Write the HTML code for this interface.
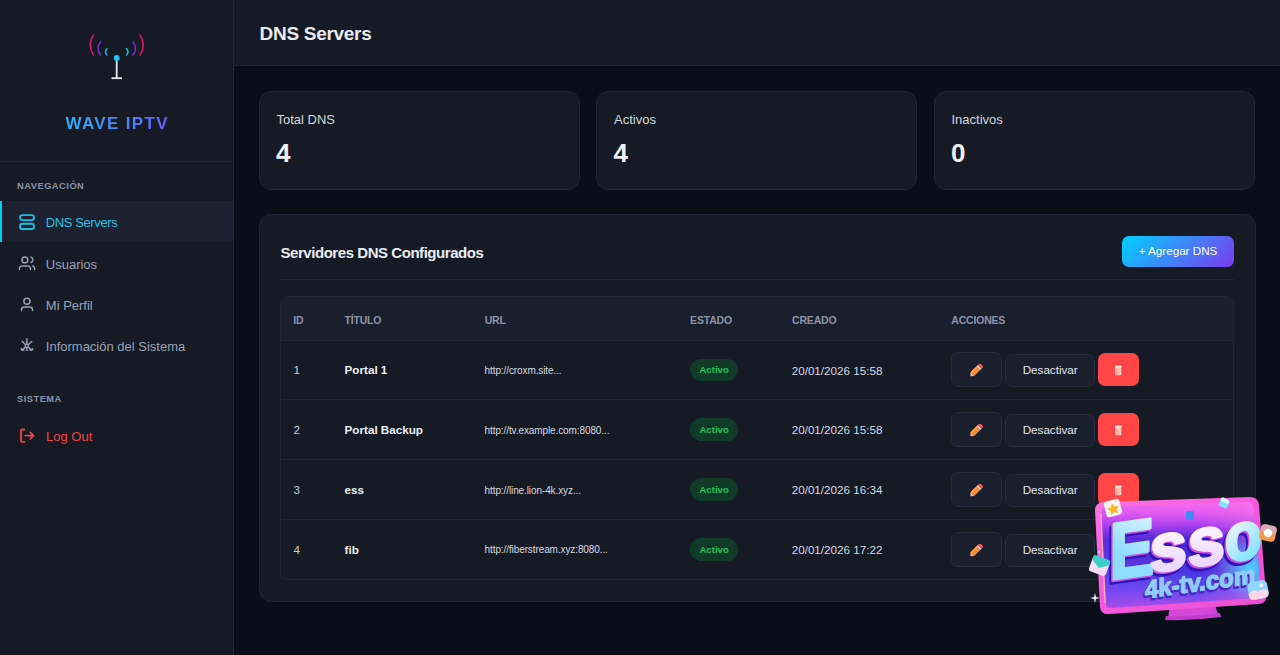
<!DOCTYPE html>
<html>
<head>
<meta charset="utf-8">
<style>
*{box-sizing:border-box;margin:0;padding:0}
html,body{width:1280px;height:655px;overflow:hidden;background:#0a0e19;font-family:"Liberation Sans",sans-serif;}
.a{position:absolute;white-space:nowrap;line-height:1}
#sb{position:absolute;left:0;top:0;width:234px;height:655px;background:#151a25;border-right:1px solid #212634}
#hd{position:absolute;left:234px;top:0;width:1046px;height:66px;background:#151a25;border-bottom:1px solid #212634}
.card{position:absolute;background:#151a25;border:1px solid #212634;border-radius:12px}
.btn{background:#1a1f2d;border:1px solid #262c3b;border-radius:7px}
.navt{font-size:13px;color:#9aa3b6}
.sect{font-size:9.3px;font-weight:700;color:#8a93a8;letter-spacing:0.5px}
.th{font-size:10.5px;font-weight:700;color:#8b93a8;letter-spacing:-0.2px}
</style>
</head>
<body>
<div id="sb">

<svg class="a" style="left:80px;top:25px" width="74" height="60" viewBox="80 25 74 60">
  <path d="M93.5 35 Q87 45 93.5 55" fill="none" stroke="#d8156a" stroke-width="1.6" stroke-linecap="round"/>
  <path d="M140 35 Q146.5 45 140 55" fill="none" stroke="#d8156a" stroke-width="1.6" stroke-linecap="round"/>
  <path d="M100.5 42 Q95.5 48.5 100.5 55" fill="none" stroke="#7a2fd4" stroke-width="1.6" stroke-linecap="round"/>
  <path d="M133 42 Q138 48.5 133 55" fill="none" stroke="#7a2fd4" stroke-width="1.6" stroke-linecap="round"/>
  <path d="M107 48.7 Q104 51.9 107 55" fill="none" stroke="#1fb4d8" stroke-width="1.5" stroke-linecap="round"/>
  <path d="M126.5 48.7 Q129.5 51.9 126.5 55" fill="none" stroke="#1fb4d8" stroke-width="1.6" stroke-linecap="round"/>
  <line x1="116.7" y1="58" x2="116.7" y2="78" stroke="#e8e8ee" stroke-width="1.8"/>
  <line x1="111.5" y1="78.2" x2="122" y2="78.2" stroke="#e8e8ee" stroke-width="1.8"/>
  <circle cx="116.7" cy="58" r="2.9" fill="#22c8f2"/>
</svg>

  <div class="a" style="left:0;width:233px;top:114.6px;text-align:center;font-size:17px;font-weight:700;letter-spacing:1.35px;padding-left:1.35px;background:linear-gradient(90deg,#2bb6ff 25%,#6a5cf8 75%);-webkit-background-clip:text;background-clip:text;color:transparent">WAVE IPTV</div>
  <div class="a" style="left:0;top:161px;width:233px;height:1px;background:#212634"></div>
  <div class="a sect" style="left:17px;top:181.93px">NAVEGACIÓN</div>
  <div class="a" style="left:0;top:201px;width:233px;height:41px;background:#1c2130"></div>
  <div class="a" style="left:0;top:201px;width:2px;height:41px;background:#00d0f5"></div>

<svg class="a" style="left:0;top:0" width="233" height="460" viewBox="0 0 233 460" fill="none" stroke-linecap="round" stroke-linejoin="round">
  <rect x="20.1" y="215.1" width="13.9" height="5" rx="2.3" stroke="#17bfe6" stroke-width="1.9"/>
  <rect x="20.1" y="223.7" width="13.9" height="5.3" rx="2.3" stroke="#17bfe6" stroke-width="1.9"/>
  <g stroke="#9aa2b5" stroke-width="1.45">
    <circle cx="24.9" cy="259.9" r="2.9"/>
    <path d="M19.4 269.4 V268.8 A3 3 0 0 1 22.4 265.9 H27.5 A3 3 0 0 1 30.5 268.8 V269.4"/>
    <path d="M30.9 257.1 A2.9 2.9 0 0 1 30.9 262.6"/>
    <path d="M32.7 266 A2.8 3 0 0 1 34.7 268.8 V269.4"/>
    <circle cx="26.9" cy="301.2" r="3.05"/>
    <path d="M21.4 310.4 V309.9 A3 3 0 0 1 24.4 307 H29.6 A3 3 0 0 1 32.6 309.9 V310.4"/>
    <circle cx="26.9" cy="345.9" r="1.7"/>
    <path d="M26.9 338.6 V344 M22.2 341.3 L25.4 344.6 M31.7 341.4 L28.4 344.6 M26.9 347.8 V350.6 M25.4 347.3 L22.2 350.1 M28.4 347.3 L31.7 350.1"/>
    <path d="M21.2 348.8 L22.2 350.3 L23.9 350" stroke-width="1.6"/>
    <path d="M32.6 348.8 L31.7 350.3 L30 350" stroke-width="1.6"/>
  </g>
  <g stroke="#ef4444" stroke-width="1.8">
    <path d="M24.4 429.5 H22.3 A1.3 1.3 0 0 0 21 430.8 V440.6 A1.3 1.3 0 0 0 22.3 441.9 H24.4"/>
    <path d="M25.3 435.6 H33.6 M30.3 432.4 L33.7 435.6 L30.3 438.8"/>
  </g>
</svg>

  <div class="a navt" style="left:45.8px;top:216.2px;color:#22c3e6;letter-spacing:-0.4px">DNS Servers</div>
  <div class="a navt" style="left:45.8px;top:257.5px">Usuarios</div>
  <div class="a navt" style="left:45.8px;top:299.0px">Mi Perfil</div>
  <div class="a navt" style="left:45.8px;top:340.3px">Información del Sistema</div>
  <div class="a sect" style="left:17px;top:395.33px">SISTEMA</div>
  <div class="a navt" style="left:46px;top:429.7px;color:#ef4444">Log Out</div>
</div>

<div id="hd">
  <div class="a" style="left:25.6px;top:23.62px;font-size:19px;font-weight:700;color:#e9ebf1;letter-spacing:-0.3px">DNS Servers</div>
</div>

<div class="card" style="left:259px;top:90.5px;width:321px;height:99px"></div>
<div class="card" style="left:596.4px;top:90.5px;width:321px;height:99px"></div>
<div class="card" style="left:934px;top:90.5px;width:321px;height:99px"></div>
<div class="a" style="left:276.5px;top:113.1px;font-size:13px;color:#d3d7df">Total DNS</div>
<div class="a" style="left:614px;top:113.1px;font-size:13px;color:#d3d7df">Activos</div>
<div class="a" style="left:951.5px;top:113.1px;font-size:13px;color:#d3d7df">Inactivos</div>
<div class="a" style="left:276px;top:139.89px;font-size:26px;font-weight:700;color:#eef0f5">4</div>
<div class="a" style="left:613.5px;top:139.89px;font-size:26px;font-weight:700;color:#eef0f5">4</div>
<div class="a" style="left:951px;top:139.89px;font-size:26px;font-weight:700;color:#eef0f5">0</div>

<div class="card" style="left:259px;top:214.3px;width:997px;height:388px"></div>
<div class="a" style="left:280.5px;top:244.7px;font-size:15px;font-weight:700;color:#e9ebf1;letter-spacing:-0.45px">Servidores DNS Configurados</div>
<div class="a" style="left:1122px;top:235.6px;width:112px;height:31px;border-radius:7px;background:linear-gradient(135deg,#00d2ff,#7c3aed)"></div>
<div class="a" style="left:1122px;top:244.82px;width:112px;text-align:center;font-size:11.67px;color:#fff">+ Agregar DNS</div>
<div class="a" style="left:280px;top:279px;width:954px;height:1px;background:#212634"></div>

<div class="a" style="left:280px;top:296px;width:954px;height:283.5px;border:1px solid #212634;border-radius:7px;overflow:hidden">
<div class="a" style="left:0;top:0;width:952px;height:43.5px;background:#1a1f2d"></div>
<div class="a" style="left:0;top:43px;width:952px;height:1px;background:#212634"></div>
<div class="a th" style="left:12.3px;top:17.71px">ID</div>
<div class="a th" style="left:63.5px;top:17.71px">TÍTULO</div>
<div class="a th" style="left:203.7px;top:17.71px">URL</div>
<div class="a th" style="left:409.1px;top:17.71px">ESTADO</div>
<div class="a th" style="left:511.1px;top:17.71px">CREADO</div>
<div class="a th" style="left:670.3px;top:17.71px">ACCIONES</div>
<div class="a" style="left:12.5px;top:67.02px;font-size:11.67px;color:#c9cdd6">1</div>
<div class="a" style="left:63.6px;top:67.02px;font-size:11.67px;font-weight:700;color:#eef0f5">Portal 1</div>
<div class="a" style="left:203.6px;top:68.94px;font-size:10px;color:#d6d9e1;letter-spacing:-0.1px">http://croxm.site...</div>
<div class="a" style="left:408.8px;top:61.60px;width:48.6px;height:22.7px;border-radius:12px;background:#123a29"></div>
<div class="a" style="left:408.8px;top:68.44px;width:48.6px;text-align:center;font-size:9.6px;font-weight:700;color:#22c55e">Activo</div>
<div class="a" style="left:510.7px;top:67.52px;font-size:11.67px;color:#d6d9e1">20/01/2026 15:58</div>
<div class="a btn" style="left:670px;top:55.00px;width:51px;height:35px"></div>
<svg class="a" style="left:688px;top:67.00px" width="14" height="13" viewBox="0 0 14 13"><g transform="translate(7 6.5) rotate(-45)"><path d="M-8 0 L-5.2 -2.6 L-5.2 2.6 Z" fill="#f3c7a8"/><path d="M-8 0 L-6.9 -1 L-6.9 1 Z" fill="#7a5a66"/><rect x="-5.2" y="-2.6" width="8.6" height="5.2" fill="#fb8a2b"/><rect x="-5.2" y="-2.6" width="8.6" height="1.5" fill="#ffa048"/><rect x="3.4" y="-2.6" width="1.8" height="5.2" fill="#dcd8e8"/><path d="M5.2 -2.6 H7 A1.1 1.1 0 0 1 8.1 -1.5 V1.5 A1.1 1.1 0 0 1 7 2.6 H5.2 Z" fill="#f4584a"/></g></svg>
<div class="a btn" style="left:724.2px;top:57.00px;width:90px;height:33px"></div>
<div class="a" style="left:724.2px;top:67.02px;width:90px;text-align:center;font-size:11.67px;color:#e2e5ec">Desactivar</div>
<div class="a" style="left:816.8px;top:56.00px;width:41.5px;height:33px;border-radius:7px;background:#ff4545"></div>
<svg class="a" style="left:833px;top:67.80px" width="9" height="11" viewBox="0 0 9 11"><rect x="0.9" y="0.6" width="7" height="2.3" rx="1" fill="#ffd9d2"/><rect x="1.1" y="3" width="6.2" height="7.3" rx="0.8" fill="#ffd0c6"/><rect x="2.6" y="3.6" width="0.8" height="6.2" fill="#ff6f86"/><rect x="4.5" y="3.6" width="0.8" height="6.2" fill="#ff9a70"/></svg>
<div class="a" style="left:0;top:102px;width:952px;height:1px;background:#212634"></div>
<div class="a" style="left:12.5px;top:126.87px;font-size:11.67px;color:#c9cdd6">2</div>
<div class="a" style="left:63.6px;top:126.87px;font-size:11.67px;font-weight:700;color:#eef0f5">Portal Backup</div>
<div class="a" style="left:203.6px;top:128.79px;font-size:10px;color:#d6d9e1;letter-spacing:-0.1px">http://tv.example.com:8080...</div>
<div class="a" style="left:408.8px;top:121.45px;width:48.6px;height:22.7px;border-radius:12px;background:#123a29"></div>
<div class="a" style="left:408.8px;top:128.29px;width:48.6px;text-align:center;font-size:9.6px;font-weight:700;color:#22c55e">Activo</div>
<div class="a" style="left:510.7px;top:127.37px;font-size:11.67px;color:#d6d9e1">20/01/2026 15:58</div>
<div class="a btn" style="left:670px;top:114.85px;width:51px;height:35px"></div>
<svg class="a" style="left:688px;top:126.85px" width="14" height="13" viewBox="0 0 14 13"><g transform="translate(7 6.5) rotate(-45)"><path d="M-8 0 L-5.2 -2.6 L-5.2 2.6 Z" fill="#f3c7a8"/><path d="M-8 0 L-6.9 -1 L-6.9 1 Z" fill="#7a5a66"/><rect x="-5.2" y="-2.6" width="8.6" height="5.2" fill="#fb8a2b"/><rect x="-5.2" y="-2.6" width="8.6" height="1.5" fill="#ffa048"/><rect x="3.4" y="-2.6" width="1.8" height="5.2" fill="#dcd8e8"/><path d="M5.2 -2.6 H7 A1.1 1.1 0 0 1 8.1 -1.5 V1.5 A1.1 1.1 0 0 1 7 2.6 H5.2 Z" fill="#f4584a"/></g></svg>
<div class="a btn" style="left:724.2px;top:116.85px;width:90px;height:33px"></div>
<div class="a" style="left:724.2px;top:126.87px;width:90px;text-align:center;font-size:11.67px;color:#e2e5ec">Desactivar</div>
<div class="a" style="left:816.8px;top:115.85px;width:41.5px;height:33px;border-radius:7px;background:#ff4545"></div>
<svg class="a" style="left:833px;top:127.65px" width="9" height="11" viewBox="0 0 9 11"><rect x="0.9" y="0.6" width="7" height="2.3" rx="1" fill="#ffd9d2"/><rect x="1.1" y="3" width="6.2" height="7.3" rx="0.8" fill="#ffd0c6"/><rect x="2.6" y="3.6" width="0.8" height="6.2" fill="#ff6f86"/><rect x="4.5" y="3.6" width="0.8" height="6.2" fill="#ff9a70"/></svg>
<div class="a" style="left:0;top:162px;width:952px;height:1px;background:#212634"></div>
<div class="a" style="left:12.5px;top:186.72px;font-size:11.67px;color:#c9cdd6">3</div>
<div class="a" style="left:63.6px;top:186.72px;font-size:11.67px;font-weight:700;color:#eef0f5">ess</div>
<div class="a" style="left:203.6px;top:188.63px;font-size:10px;color:#d6d9e1;letter-spacing:-0.1px">http://line.lion-4k.xyz...</div>
<div class="a" style="left:408.8px;top:181.30px;width:48.6px;height:22.7px;border-radius:12px;background:#123a29"></div>
<div class="a" style="left:408.8px;top:188.13px;width:48.6px;text-align:center;font-size:9.6px;font-weight:700;color:#22c55e">Activo</div>
<div class="a" style="left:510.7px;top:187.22px;font-size:11.67px;color:#d6d9e1">20/01/2026 16:34</div>
<div class="a btn" style="left:670px;top:174.70px;width:51px;height:35px"></div>
<svg class="a" style="left:688px;top:186.70px" width="14" height="13" viewBox="0 0 14 13"><g transform="translate(7 6.5) rotate(-45)"><path d="M-8 0 L-5.2 -2.6 L-5.2 2.6 Z" fill="#f3c7a8"/><path d="M-8 0 L-6.9 -1 L-6.9 1 Z" fill="#7a5a66"/><rect x="-5.2" y="-2.6" width="8.6" height="5.2" fill="#fb8a2b"/><rect x="-5.2" y="-2.6" width="8.6" height="1.5" fill="#ffa048"/><rect x="3.4" y="-2.6" width="1.8" height="5.2" fill="#dcd8e8"/><path d="M5.2 -2.6 H7 A1.1 1.1 0 0 1 8.1 -1.5 V1.5 A1.1 1.1 0 0 1 7 2.6 H5.2 Z" fill="#f4584a"/></g></svg>
<div class="a btn" style="left:724.2px;top:176.70px;width:90px;height:33px"></div>
<div class="a" style="left:724.2px;top:186.72px;width:90px;text-align:center;font-size:11.67px;color:#e2e5ec">Desactivar</div>
<div class="a" style="left:816.8px;top:175.70px;width:41.5px;height:33px;border-radius:7px;background:#ff4545"></div>
<svg class="a" style="left:833px;top:187.50px" width="9" height="11" viewBox="0 0 9 11"><rect x="0.9" y="0.6" width="7" height="2.3" rx="1" fill="#ffd9d2"/><rect x="1.1" y="3" width="6.2" height="7.3" rx="0.8" fill="#ffd0c6"/><rect x="2.6" y="3.6" width="0.8" height="6.2" fill="#ff6f86"/><rect x="4.5" y="3.6" width="0.8" height="6.2" fill="#ff9a70"/></svg>
<div class="a" style="left:0;top:222px;width:952px;height:1px;background:#212634"></div>
<div class="a" style="left:12.5px;top:246.57px;font-size:11.67px;color:#c9cdd6">4</div>
<div class="a" style="left:63.6px;top:246.57px;font-size:11.67px;font-weight:700;color:#eef0f5">fib</div>
<div class="a" style="left:203.6px;top:248.48px;font-size:10px;color:#d6d9e1;letter-spacing:-0.1px">http://fiberstream.xyz:8080...</div>
<div class="a" style="left:408.8px;top:241.15px;width:48.6px;height:22.7px;border-radius:12px;background:#123a29"></div>
<div class="a" style="left:408.8px;top:247.98px;width:48.6px;text-align:center;font-size:9.6px;font-weight:700;color:#22c55e">Activo</div>
<div class="a" style="left:510.7px;top:247.07px;font-size:11.67px;color:#d6d9e1">20/01/2026 17:22</div>
<div class="a btn" style="left:670px;top:234.55px;width:51px;height:35px"></div>
<svg class="a" style="left:688px;top:246.55px" width="14" height="13" viewBox="0 0 14 13"><g transform="translate(7 6.5) rotate(-45)"><path d="M-8 0 L-5.2 -2.6 L-5.2 2.6 Z" fill="#f3c7a8"/><path d="M-8 0 L-6.9 -1 L-6.9 1 Z" fill="#7a5a66"/><rect x="-5.2" y="-2.6" width="8.6" height="5.2" fill="#fb8a2b"/><rect x="-5.2" y="-2.6" width="8.6" height="1.5" fill="#ffa048"/><rect x="3.4" y="-2.6" width="1.8" height="5.2" fill="#dcd8e8"/><path d="M5.2 -2.6 H7 A1.1 1.1 0 0 1 8.1 -1.5 V1.5 A1.1 1.1 0 0 1 7 2.6 H5.2 Z" fill="#f4584a"/></g></svg>
<div class="a btn" style="left:724.2px;top:236.55px;width:90px;height:33px"></div>
<div class="a" style="left:724.2px;top:246.57px;width:90px;text-align:center;font-size:11.67px;color:#e2e5ec">Desactivar</div>
<div class="a" style="left:816.8px;top:235.55px;width:41.5px;height:33px;border-radius:7px;background:#ff4545"></div>
<svg class="a" style="left:833px;top:247.35px" width="9" height="11" viewBox="0 0 9 11"><rect x="0.9" y="0.6" width="7" height="2.3" rx="1" fill="#ffd9d2"/><rect x="1.1" y="3" width="6.2" height="7.3" rx="0.8" fill="#ffd0c6"/><rect x="2.6" y="3.6" width="0.8" height="6.2" fill="#ff6f86"/><rect x="4.5" y="3.6" width="0.8" height="6.2" fill="#ff9a70"/></svg>
</div>

<svg class="a" style="left:1080px;top:488px" width="200" height="140" viewBox="1080 488 200 140">
 <defs>
  <linearGradient id="wfr" x1="0" y1="0" x2="1" y2="1">
   <stop offset="0" stop-color="#ff74e4"/><stop offset="0.5" stop-color="#f558dc"/><stop offset="1" stop-color="#ea4fd2"/>
  </linearGradient>
  <linearGradient id="wsc" gradientUnits="userSpaceOnUse" x1="1180" y1="503" x2="1180" y2="608">
   <stop offset="0" stop-color="#f46cf0"/><stop offset="0.1" stop-color="#e25af2"/><stop offset="0.22" stop-color="#a23ef0"/><stop offset="0.34" stop-color="#4424d4"/><stop offset="0.62" stop-color="#4232dc"/><stop offset="0.82" stop-color="#5a48f0"/><stop offset="1" stop-color="#a84cea"/>
  </linearGradient>
  <linearGradient id="wtop" x1="0" y1="0" x2="1" y2="0">
   <stop offset="0" stop-color="#b040f4" stop-opacity="0.25"/><stop offset="0.6" stop-color="#f06ae4" stop-opacity="0"/><stop offset="1" stop-color="#ff80e0" stop-opacity="0.45"/>
  </linearGradient>
  <radialGradient id="wglow" gradientUnits="userSpaceOnUse" cx="1250" cy="568" r="32">
   <stop offset="0" stop-color="#46d2ff" stop-opacity="1"/><stop offset="1" stop-color="#46d2ff" stop-opacity="0"/>
  </radialGradient>
  <linearGradient id="gE" gradientUnits="userSpaceOnUse" x1="1112" y1="585" x2="1150" y2="515">
   <stop offset="0" stop-color="#90dcff"/><stop offset="0.45" stop-color="#c8eeff"/><stop offset="1" stop-color="#f8f2ff"/>
  </linearGradient>
  <linearGradient id="gS" gradientUnits="userSpaceOnUse" x1="0" y1="-40" x2="0" y2="0">
   <stop offset="0" stop-color="#fff4ff"/><stop offset="1" stop-color="#ead8ff"/>
  </linearGradient>
  <linearGradient id="gO" gradientUnits="userSpaceOnUse" x1="-15" y1="-40" x2="15" y2="0">
   <stop offset="0" stop-color="#f4f6ff"/><stop offset="1" stop-color="#78e0ff"/>
  </linearGradient>
 </defs>
 <!-- stand -->
 <path d="M1170 605 L1214 602 L1218 614 Q1193 618 1168 618 Z" fill="#d548d8"/>
 <path d="M1166 616 Q1193 617 1220 613 L1221 617 Q1193 621 1165 620 Z" fill="#c03ccc"/>
 <!-- frame -->
 <path d="M1103 502 L1250 497 Q1258 497 1259 505 L1266 595 Q1267 603 1259 604 L1109 614 Q1101 615 1100 607 L1095 510 Q1095 503 1103 502 Z" fill="url(#wfr)"/>
 <path d="M1107 507 L1247 502 Q1253 502 1254 508 L1261 591 Q1262 598 1255 598 L1112 608 Q1106 609 1106 602 L1101 513 Q1101 507 1107 507 Z" fill="url(#wsc)"/>
 <path d="M1107 507 L1247 502 Q1253 502 1254 508 L1261 591 Q1262 598 1255 598 L1112 608 Q1106 609 1106 602 L1101 513 Q1101 507 1107 507 Z" fill="url(#wtop)"/>
 <path d="M1107 507 L1247 502 Q1253 502 1254 508 L1261 591 Q1262 598 1255 598 L1112 608 Q1106 609 1106 602 L1101 513 Q1101 507 1107 507 Z" fill="url(#wglow)"/>
 <path d="M1101 513 L1105 603" stroke="#ffc0a8" stroke-width="1.2" opacity="0.85"/>
 <g transform="translate(1130 580) skewY(-8) translate(-1130 -580)">
  <text x="0" y="0" text-anchor="middle" font-family="Liberation Sans" font-weight="700" font-size="80" fill="#3014b8" stroke="#3014b8" stroke-width="4" stroke-linejoin="round" transform="translate(1129 580.3) scale(0.84 1)" >E</text><text x="0" y="0" text-anchor="middle" font-family="Liberation Sans" font-weight="700" font-size="67" fill="#3014b8" stroke="#3014b8" stroke-width="4" stroke-linejoin="round" transform="translate(1165.5 578.7) scale(1.0 1)" >s</text><text x="0" y="0" text-anchor="middle" font-family="Liberation Sans" font-weight="700" font-size="67" fill="#3014b8" stroke="#3014b8" stroke-width="4" stroke-linejoin="round" transform="translate(1203.5 578.7) scale(1.0 1)" >s</text><text x="0" y="0" text-anchor="middle" font-family="Liberation Sans" font-weight="700" font-size="67" fill="#3014b8" stroke="#3014b8" stroke-width="4" stroke-linejoin="round" transform="translate(1240.5 578.7) scale(0.9 1)" >o</text>
  <text x="0" y="0" text-anchor="middle" font-family="Liberation Sans" font-weight="700" font-size="80" fill="#d050e8" stroke="#d050e8" stroke-width="3" stroke-linejoin="round" transform="translate(1130.5 578.3) scale(0.84 1)" >E</text><text x="0" y="0" text-anchor="middle" font-family="Liberation Sans" font-weight="700" font-size="67" fill="#d050e8" stroke="#d050e8" stroke-width="3" stroke-linejoin="round" transform="translate(1167.0 576.7) scale(1.0 1)" >s</text><text x="0" y="0" text-anchor="middle" font-family="Liberation Sans" font-weight="700" font-size="67" fill="#d050e8" stroke="#d050e8" stroke-width="3" stroke-linejoin="round" transform="translate(1205.0 576.7) scale(1.0 1)" >s</text><text x="0" y="0" text-anchor="middle" font-family="Liberation Sans" font-weight="700" font-size="67" fill="#d050e8" stroke="#d050e8" stroke-width="3" stroke-linejoin="round" transform="translate(1242.0 576.7) scale(0.9 1)" >o</text>
  <text x="0" y="0" text-anchor="middle" font-family="Liberation Sans" font-weight="700" font-size="80" fill="url(#gE)" stroke="url(#gE)" stroke-width="3" stroke-linejoin="round" transform="translate(1132 576.8) scale(0.84 1)" >E</text><text x="0" y="0" text-anchor="middle" font-family="Liberation Sans" font-weight="700" font-size="67" fill="url(#gS)" stroke="url(#gS)" stroke-width="3" stroke-linejoin="round" transform="translate(1168.5 575.2) scale(1.0 1)" >s</text><text x="0" y="0" text-anchor="middle" font-family="Liberation Sans" font-weight="700" font-size="67" fill="url(#gS)" stroke="url(#gS)" stroke-width="3" stroke-linejoin="round" transform="translate(1206.5 575.2) scale(1.0 1)" >s</text><text x="0" y="0" text-anchor="middle" font-family="Liberation Sans" font-weight="700" font-size="67" fill="url(#gO)" stroke="url(#gO)" stroke-width="3" stroke-linejoin="round" transform="translate(1243.5 575.2) scale(0.9 1)" >o</text>
 </g>
 <g transform="translate(1130 580) skewY(-8) translate(-1130 -580)">
  <g transform="translate(1200 600.5) scale(0.96 1)">
   <text x="-1.2" y="1.8" text-anchor="middle" font-family="Liberation Sans" font-weight="700" font-size="25" fill="#4a26c4" stroke="#4a26c4" stroke-width="2.4" stroke-linejoin="round">4k-tv.com</text>
   <text x="0" y="0" text-anchor="middle" font-family="Liberation Sans" font-weight="700" font-size="25" fill="#8ecbff" stroke="#8ecbff" stroke-width="1.4" stroke-linejoin="round">4k-tv.com</text>
  </g>
 </g>
 <!-- decorations -->
 <g transform="rotate(-15 1113 508)"><rect x="1105" y="500" width="16" height="16" rx="3" fill="#fff4f0"/><path d="M1113 503 L1115 507 L1119 507.5 L1116 510.5 L1117 514.5 L1113 512.5 L1109 514.5 L1110 510.5 L1107 507.5 L1111 507 Z" fill="#f9b82a"/></g>
 <g transform="rotate(20 1099 567)"><rect x="1090" y="559" width="18" height="15" rx="3" fill="#f2dcf8"/><path d="M1090 562 L1099 568 L1108 562 L1108 559 Q1108 557 1106 557 L1092 557 Q1090 557 1090 559 Z" fill="#3ed0c8"/></g>
 <path d="M1095 593 L1096 597 L1100 598 L1096 599 L1095 603 L1094 599 L1090 598 L1094 597 Z" fill="#f4e8ff"/>
 <circle cx="1099" cy="552" r="1.3" fill="#9ad6ff"/>
 <g transform="rotate(25 1224 503)"><rect x="1219.5" y="498.5" width="9" height="9" rx="2" fill="#7fe2ff"/><rect x="1219.5" y="498.5" width="9" height="4" rx="2" fill="#d0f8ff"/></g>
 <rect x="1186" y="511" width="8" height="8" rx="1.5" fill="#3b8ff0"/>
 <g transform="rotate(12 1268 533)"><rect x="1260" y="525" width="16" height="16" rx="4" fill="#f49a4a"/><rect x="1260" y="525" width="16" height="8" rx="4" fill="#c6b4ff" opacity="0.6"/><circle cx="1268" cy="533" r="4.2" fill="#fff"/></g>
 <g transform="rotate(-10 1258 590)"><rect x="1248" y="581" width="20" height="18" rx="5" fill="#8fd6ff"/><path d="M1248 593 Q1254 587 1258 592 Q1262 589 1268 592 L1268 594 Q1268 599 1263 599 L1253 599 Q1248 599 1248 594 Z" fill="#ffd8ee"/><circle cx="1262" cy="586" r="2" fill="#e8f6ff"/></g>
</svg>

</body>
</html>
